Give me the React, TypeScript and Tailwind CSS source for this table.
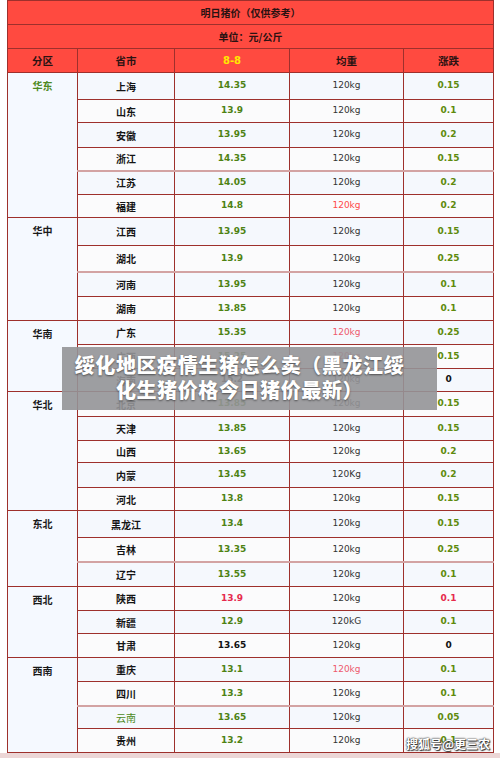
type Row = {
  prov: string
  price: string
  weight: string
  change: string
  h: string
  provGreen?: boolean
  priceColor?: string
  weightColor?: string
  changeColor?: string
  pinkTop?: boolean
}

type Group = { name: string; green?: boolean; rows: Row[] }

const RED = 'text-[#e62a4c]'
const PINK = 'text-[#ee5a6e]'
const BLACK = 'text-[#111]'

const groups: Group[] = [
  {
    name: '华东',
    green: true,
    rows: [
      { prov: '上海', price: '14.35', weight: '120kg', change: '0.15', h: 'h-[27px]' },
      { prov: '山东', price: '13.9', weight: '120kg', change: '0.1', h: 'h-[23px]' },
      { prov: '安徽', price: '13.95', weight: '120kg', change: '0.2', h: 'h-[25px]' },
      { prov: '浙江', price: '14.35', weight: '120kg', change: '0.15', h: 'h-[23px]' },
      { prov: '江苏', price: '14.05', weight: '120kg', change: '0.2', h: 'h-[24px]', pinkTop: true },
      { prov: '福建', price: '14.8', weight: '120kg', change: '0.2', h: 'h-[23px]', weightColor: 'text-[#ff4a4a]' },
    ],
  },
  {
    name: '华中',
    rows: [
      { prov: '江西', price: '13.95', weight: '120kg', change: '0.15', h: 'h-[28px]' },
      { prov: '湖北', price: '13.9', weight: '120kg', change: '0.25', h: 'h-[26px]' },
      { prov: '河南', price: '13.95', weight: '120kg', change: '0.1', h: 'h-[25px]', pinkTop: true },
      { prov: '湖南', price: '13.85', weight: '120kg', change: '0.1', h: 'h-[24px]' },
    ],
  },
  {
    name: '华南',
    rows: [
      { prov: '广东', price: '15.35', weight: '120kg', change: '0.25', h: 'h-[24px]', weightColor: PINK },
      { prov: '广西', price: '15.25', weight: '120kg', change: '0.15', h: 'h-[24px]', weightColor: PINK },
      { prov: '海南', price: '15.2', weight: '120kg', change: '0', h: 'h-[23px]', priceColor: BLACK, changeColor: BLACK },
    ],
  },
  {
    name: '华北',
    rows: [
      { prov: '北京', price: '13.85', weight: '120kg', change: '0.15', h: 'h-[25px]' },
      { prov: '天津', price: '13.85', weight: '120kg', change: '0.15', h: 'h-[24px]' },
      { prov: '山西', price: '13.65', weight: '120kg', change: '0.2', h: 'h-[22px]' },
      { prov: '内蒙', price: '13.45', weight: '120Kg', change: '0.2', h: 'h-[25px]' },
      { prov: '河北', price: '13.8', weight: '120kg', change: '0.15', h: 'h-[23px]' },
    ],
  },
  {
    name: '东北',
    rows: [
      { prov: '黑龙江', price: '13.4', weight: '120kg', change: '0.15', h: 'h-[27px]' },
      { prov: '吉林', price: '13.35', weight: '120kg', change: '0.25', h: 'h-[24px]' },
      { prov: '辽宁', price: '13.55', weight: '120kg', change: '0.1', h: 'h-[25px]', pinkTop: true },
    ],
  },
  {
    name: '西北',
    rows: [
      { prov: '陕西', price: '13.9', weight: '120kg', change: '0.1', h: 'h-[24px]', priceColor: RED, changeColor: RED },
      { prov: '新疆', price: '12.9', weight: '120kG', change: '0.1', h: 'h-[23px]' },
      { prov: '甘肃', price: '13.65', weight: '120kg', change: '0', h: 'h-[24px]', priceColor: BLACK, changeColor: BLACK },
    ],
  },
  {
    name: '西南',
    rows: [
      { prov: '重庆', price: '13.1', weight: '120kg', change: '0.1', h: 'h-[24px]', weightColor: PINK },
      { prov: '四川', price: '13.3', weight: '120kg', change: '0.1', h: 'h-[24px]' },
      { prov: '云南', price: '13.65', weight: '120kg', change: '0.05', h: 'h-[23px]', provGreen: true, pinkTop: true },
      { prov: '贵州', price: '13.2', weight: '120kg', change: '0.1', h: 'h-[24px]' },
    ],
  },
]

const cjk = "font-['Noto_Sans_CJK_SC',sans-serif]"
const num = "font-['DejaVu_Sans',sans-serif]"

export default function App() {
  let idx = 0
  return (
    <div className="relative w-[500px] h-[758px] bg-white overflow-hidden">
      <table className="ml-[7px] w-[486px] table-fixed border-collapse border border-[#9e302c] text-center">
        <colgroup>
          <col className="w-[70px]" />
          <col className="w-[97px]" />
          <col className="w-[115px]" />
          <col className="w-[114px]" />
          <col className="w-[90px]" />
        </colgroup>
        <thead>
          <tr className="h-[24px] bg-[#ff4a40]">
            <th colSpan={5} className={`border border-[#9e302c] ${cjk} text-[10px] font-bold text-[#2a1212]`}>
              明日猪价（仅供参考）
            </th>
          </tr>
          <tr className="h-[24px] bg-[#ff4a40]">
            <th colSpan={5} className={`border border-[#9e302c] ${cjk} text-[10px] font-bold text-[#2a1212]`}>
              单位：元/公斤
            </th>
          </tr>
          <tr className="h-[24px] bg-[#ff4a40] text-[10.5px] font-bold text-[#2a1212]">
            <th className={`border border-[#9e302c] ${cjk}`}>分区</th>
            <th className={`border border-[#9e302c] ${cjk}`}>省市</th>
            <th className={`border border-[#9e302c] ${num} text-[10px] text-[#ffe800]`}>8-8</th>
            <th className={`border border-[#9e302c] ${cjk}`}>均重</th>
            <th className={`border border-[#9e302c] ${cjk}`}>涨跌</th>
          </tr>
        </thead>
        <tbody>
          {groups.map(g =>
            g.rows.map((r, i) => {
              const odd = idx++ % 2 === 0
              const bg = odd ? 'bg-[#f5f8fd]' : 'bg-[#fbfbfc]'
              const top = r.pinkTop ? 'border-t-2 border-t-[#d3a3a3]' : ''
              return (
                <tr key={r.prov} className={`${r.h} ${bg}`}>
                  {i === 0 && (
                    <td
                      rowSpan={g.rows.length}
                      className={`border border-[#9e302c] bg-[#f5f9ff] align-top pt-[5px] ${cjk} text-[10px] font-bold ${g.green ? 'text-[#4e8a22]' : 'text-[#1a1a1a]'}`}
                    >
                      {g.name}
                    </td>
                  )}
                  <td
                    className={`border border-[#9e302c] ${top} ${cjk} text-[10px] ${r.provGreen ? 'font-normal text-[#4e8a22]' : 'font-bold text-[#151515]'}`}
                  >
                    {r.prov}
                  </td>
                  <td className={`border border-[#9e302c] ${top} ${num} text-[9px] font-bold ${r.priceColor ?? 'text-[#4d8212]'}`}>
                    {r.price}
                  </td>
                  <td className={`border border-[#9e302c] border-l-[#c27474] ${top} ${num} text-[9px] ${r.weightColor ?? 'text-[#333]'}`}>
                    {r.weight}
                  </td>
                  <td className={`border border-[#9e302c] ${top} ${num} text-[9px] font-bold ${r.changeColor ?? 'text-[#5e8a0c]'}`}>
                    {r.change}
                  </td>
                </tr>
              )
            })
          )}
        </tbody>
      </table>
      <div className="h-[5px] bg-[#ecd6d6]" />

      {/* title overlay */}
      <div className="absolute left-[62px] top-[347px] w-[375px] h-[63px] bg-[#939397]/90 pl-[8px] pr-[28px] pt-[5px]">
        <p
          className={`${cjk} text-center text-[20px] leading-[25px] font-black text-white tracking-[0.6px] [text-shadow:0_1px_2px_rgba(0,0,0,0.5)]`}
        >
          绥化地区疫情生猪怎么卖（黑龙江绥化生猪价格今日猪价最新）
        </p>
      </div>

      {/* watermark */}
      <div
        className={`absolute left-[406px] top-[736px] ${cjk} text-[12px] leading-[16px] font-bold text-white [text-shadow:0_0_1px_#333,0_0_2px_#333,1px_1px_1px_#333]`}
      >
        搜狐号@更三农
      </div>
    </div>
  )
}
